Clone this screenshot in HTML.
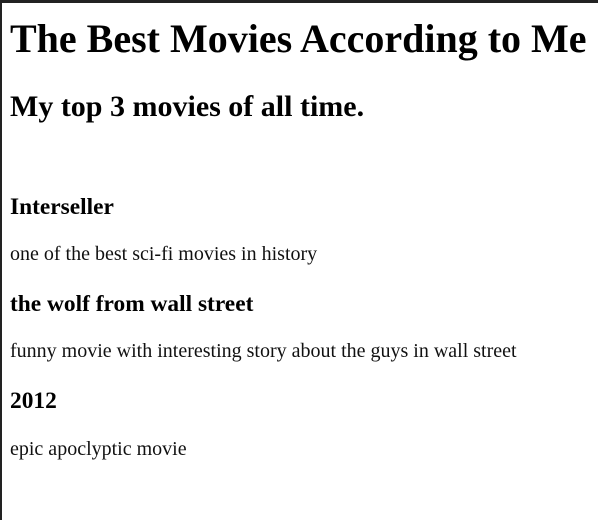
<!DOCTYPE html>
<html><head><style>
html,body{margin:0;padding:0;background:#fff;}
body{width:598px;height:520px;position:relative;overflow:hidden;font-family:"Liberation Serif",serif;color:#000;}
.bt{position:absolute;left:0;top:0;width:598px;height:3px;background:#222;}
.bl{position:absolute;left:0;top:0;width:2px;height:520px;background:#222;}
.t{position:absolute;left:10px;margin:0;white-space:nowrap;}
h1.t{font-size:40px;line-height:40px;top:19px;}
h2.t{font-size:30px;line-height:30px;top:92px;}
h3.t{font-size:23.4px;line-height:23.4px;}
p.t{font-size:20px;line-height:20px;color:#111;}
</style></head><body>
<div class="bt"></div><div class="bl"></div>
<h1 class="t">The Best Movies According to Me</h1>
<h2 class="t">My top 3 movies of all time.</h2>
<h3 class="t" style="top:196px">Interseller</h3>
<p class="t" style="top:244px">one of the best sci-fi movies in history</p>
<h3 class="t" style="top:293px">the wolf from wall street</h3>
<p class="t" style="top:341px">funny movie with interesting story about the guys in wall street</p>
<h3 class="t" style="top:390px">2012</h3>
<p class="t" style="top:439px">epic apoclyptic movie</p>
</body></html>
